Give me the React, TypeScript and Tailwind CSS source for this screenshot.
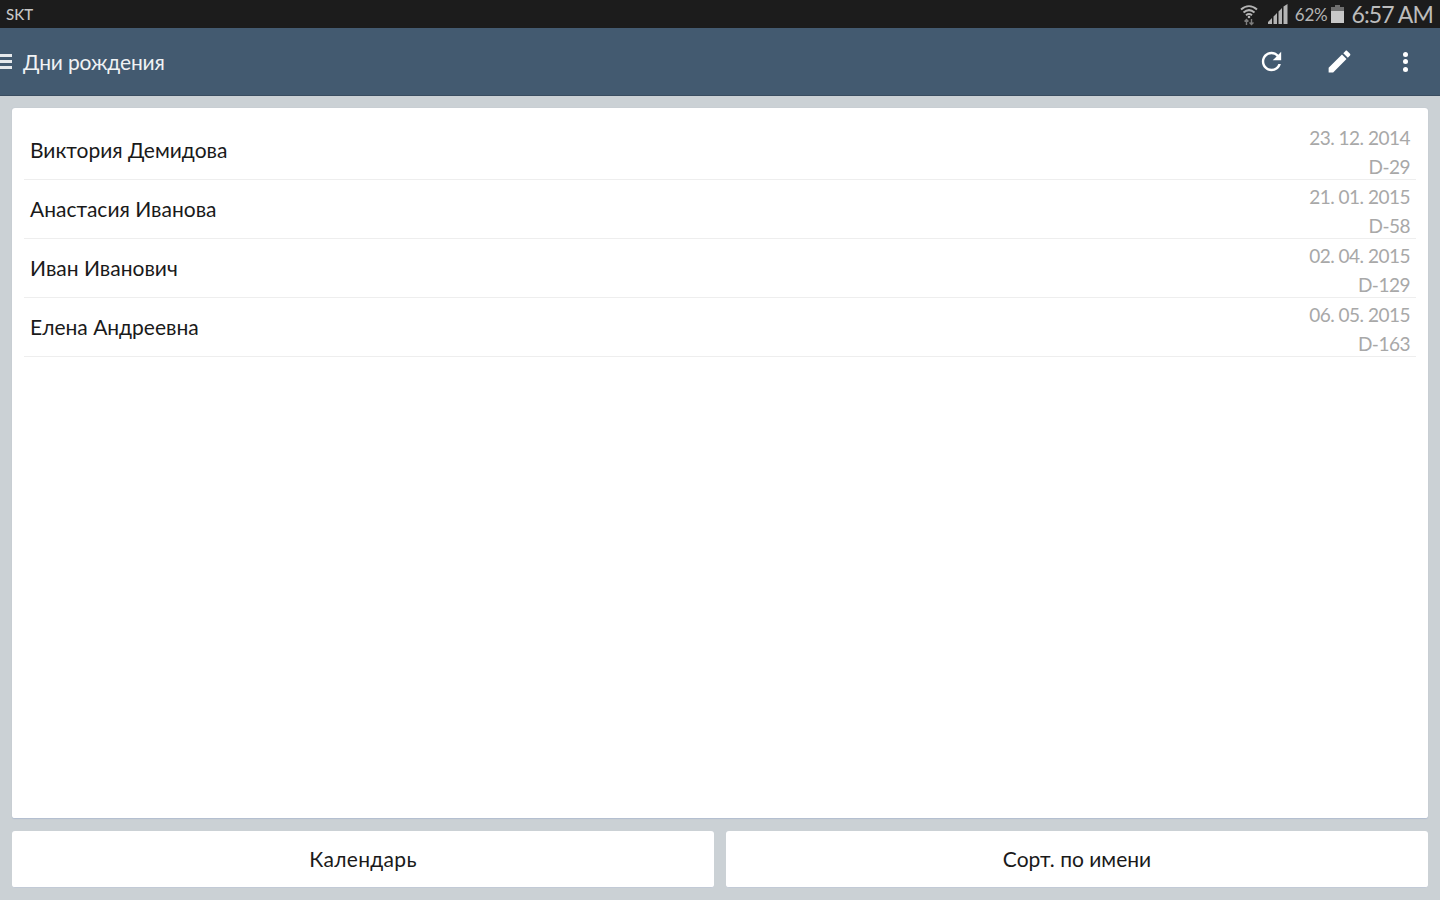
const people = [
  { name: 'Виктория Демидова', date: '23. 12. 2014', left: 'D-29' },
  { name: 'Анастасия Иванова', date: '21. 01. 2015', left: 'D-58' },
  { name: 'Иван Иванович', date: '02. 04. 2015', left: 'D-129' },
  { name: 'Елена Андреевна', date: '06. 05. 2015', left: 'D-163' },
]

function StatusIcons() {
  return (
    <div className="flex items-center text-[#b4b4b4]">
      <svg width="18" height="24" viewBox="0 0 18 24" className="mr-[10px]" fill="none" stroke="currentColor">
        <path d="M1 7.500C6 3 12 3 17 7.500" strokeWidth="2" />
        <path d="M3.500 10.500C7 7.500 11 7.500 14.500 10.500" strokeWidth="2" />
        <path d="M6 13.200C8 11.600 10 11.600 12 13.200" strokeWidth="2" />
        <circle cx="9" cy="15" r="1.300" fill="currentColor" stroke="none" />
        <path d="M6.500 23v-5M4.500 19.500l2-2 2 2M11.500 17v5M9.500 20.500l2 2 2-2" strokeWidth="1.400" opacity="0.65" />
      </svg>
      <svg width="20" height="20" viewBox="0 0 20 20" className="mr-[7px]" fill="currentColor">
        <path d="M0 20v-2l4-4v6zM5.500 20v-7.500l3.500-3.500v11zM10.500 20V7.500L14 4v16zM15.500 20V2.500L19.500 0v20z" />
      </svg>
      <span className="mr-[4px] text-[17px] leading-none tracking-[-0.2px]">62%</span>
      <svg width="13" height="18" viewBox="0 0 13 18" className="mr-[7px]">
        <path d="M4 0h5v2h4v16H0V2h4z" fill="#6f6f6f" />
        <path d="M0 6h13v12H0z" fill="#c8c8c8" />
      </svg>
      <span className="mr-[7px] text-[23px] leading-[26px] tracking-[-0.9px] text-[#bdbdbd]">6:57 AM</span>
    </div>
  )
}

export default function App() {
  return (
    <div className="flex h-[900px] flex-col overflow-hidden bg-[#cbd1d5] font-['Lato','Noto_Sans',sans-serif]">
      <div className="flex h-[28px] items-center justify-between bg-[#1c1c1c]">
        <span className="pl-[6px] text-[15px] font-medium text-[#c8c8c8]">SKT</span>
        <StatusIcons />
      </div>

      <div className="flex h-[68px] items-center justify-between border-b border-[#3a4d60] bg-[#435a70] text-white">
        <div className="flex items-center">
          <div className="flex w-[12px] flex-col gap-[3px]">
            <div className="h-[3px] bg-[#e6e9ec]" />
            <div className="h-[3px] bg-[#e6e9ec]" />
            <div className="h-[3px] bg-[#e6e9ec]" />
          </div>
          <span className="ml-[11px] text-[21px] tracking-[-0.15px] text-[#f0f2f4]">Дни рождения</span>
        </div>
        <div className="flex items-center">
          <svg width="29" height="29" viewBox="0 0 24 24" fill="currentColor" className="mr-[39px]">
            <path d="M17.650 6.350C16.200 4.900 14.210 4 12 4c-4.420 0-7.990 3.580-7.990 8s3.570 8 7.990 8c3.730 0 6.840-2.550 7.730-6h-2.080c-.820 2.330-3.040 4-5.650 4-3.310 0-6-2.690-6-6s2.690-6 6-6c1.660 0 3.140.690 4.220 1.780L13 11h7V4l-2.350 2.350z" />
          </svg>
          <svg width="29" height="29" viewBox="0 0 24 24" fill="currentColor" className="mr-[49px]">
            <path d="M3 17.250V21h3.750L17.810 9.940l-3.750-3.750L3 17.250zM20.710 7.040c.390-.390.390-1.020 0-1.410l-2.340-2.340c-.390-.390-1.020-.390-1.410 0l-1.830 1.830 3.750 3.750 1.830-1.830z" />
          </svg>
          <div className="mr-[32px] flex flex-col gap-[2.500px]">
            <div className="h-[5px] w-[5px] rounded-full bg-white" />
            <div className="h-[5px] w-[5px] rounded-full bg-white" />
            <div className="h-[5px] w-[5px] rounded-full bg-white" />
          </div>
        </div>
      </div>

      <div className="flex min-h-0 flex-1 flex-col gap-[12px] p-[12px]">
        <div className="flex-1 rounded-[3px] border-b border-[#b4bfd0] bg-white px-[12px] pt-[13px] shadow-[0_0_1px_#aab4c0]">
          {people.map(p => (
            <div key={p.name} className="flex h-[59px] items-center justify-between border-b border-[#eeeeee] px-[6px]">
              <span className="text-[21px] text-[#1a1a1a]">{p.name}</span>
              <div className="pt-[4px] text-right text-[19px] leading-[29px] tracking-[-0.5px] text-[#a8a8a8]">
                <div>{p.date}</div>
                <div>{p.left}</div>
              </div>
            </div>
          ))}
        </div>
        <div className="flex h-[57px] gap-[12px]">
          <button className="flex-1 rounded-[3px] border-b border-[#c2cad6] bg-white text-[21px] tracking-[0.3px] text-[#1a1a1a]">Календарь</button>
          <button className="flex-1 rounded-[3px] border-b border-[#c2cad6] bg-white text-[21px] text-[#1a1a1a]">Сорт. по имени</button>
        </div>
      </div>
    </div>
  )
}
